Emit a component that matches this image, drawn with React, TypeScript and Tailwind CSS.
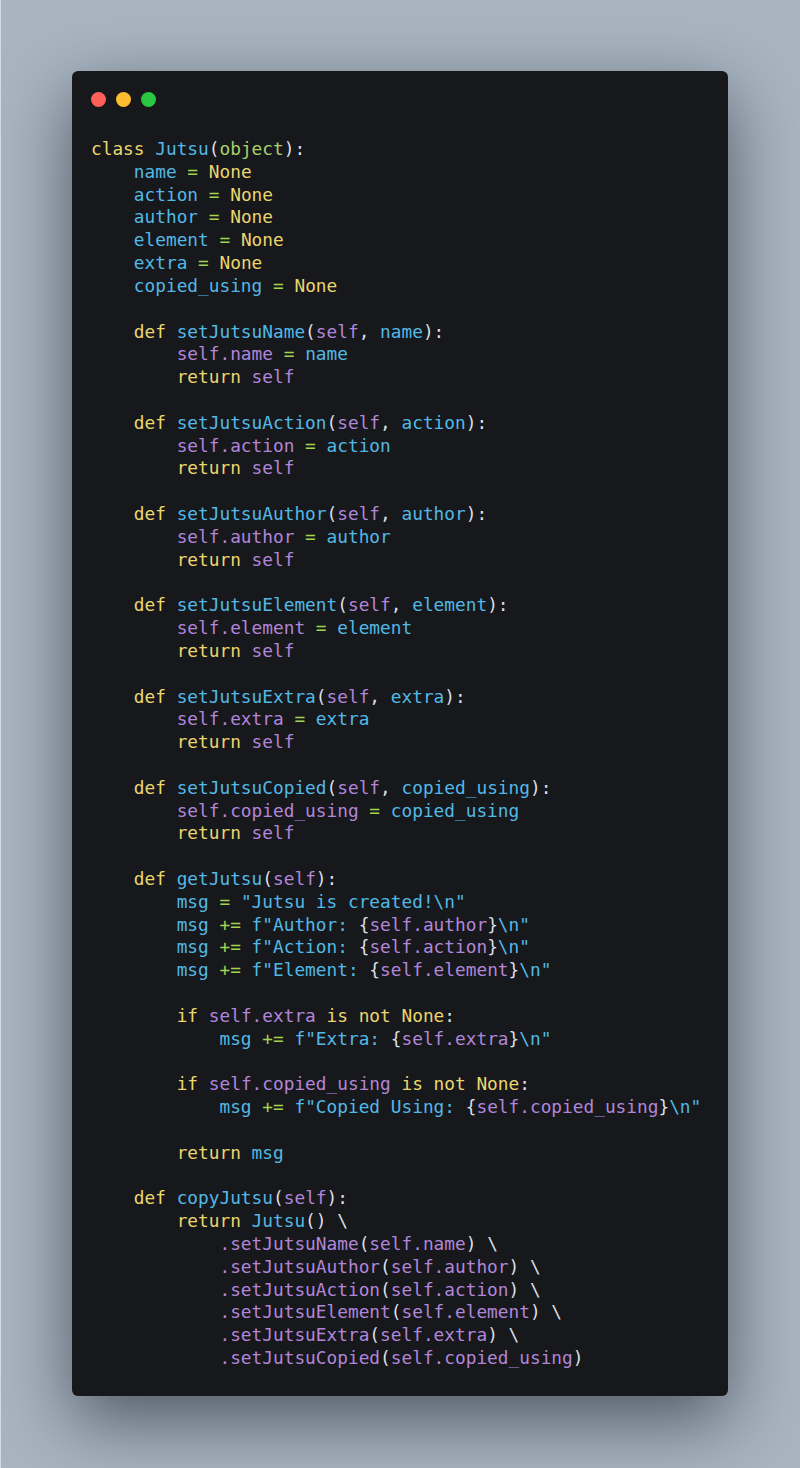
import React from 'react';

type Tok = [string, string];

const K = 'text-[#ead66e]';
const I = 'text-[#52b8e6]';
const P = 'text-[#b186d9]';
const W = 'text-[#dcdfe4]';
const G = 'text-[#a2d452]';
const O = 'text-[#a9d06a]';

const lines: Tok[][] = [
  [['class', K], [' Jutsu', I], ['(', W], ['object', O], ['):', W]],
  [['    name', I], [' = ', G], ['None', K]],
  [['    action', I], [' = ', G], ['None', K]],
  [['    author', I], [' = ', G], ['None', K]],
  [['    element', I], [' = ', G], ['None', K]],
  [['    extra', I], [' = ', G], ['None', K]],
  [['    copied_using', I], [' = ', G], ['None', K]],
  [],
  [['    def', K], [' setJutsuName', I], ['(', W], ['self', P], [', ', W], ['name', I], ['):', W]],
  [['        self.name', P], [' = ', G], ['name', I]],
  [['        return', K], [' self', P]],
  [],
  [['    def', K], [' setJutsuAction', I], ['(', W], ['self', P], [', ', W], ['action', I], ['):', W]],
  [['        self.action', P], [' = ', G], ['action', I]],
  [['        return', K], [' self', P]],
  [],
  [['    def', K], [' setJutsuAuthor', I], ['(', W], ['self', P], [', ', W], ['author', I], ['):', W]],
  [['        self.author', P], [' = ', G], ['author', I]],
  [['        return', K], [' self', P]],
  [],
  [['    def', K], [' setJutsuElement', I], ['(', W], ['self', P], [', ', W], ['element', I], ['):', W]],
  [['        self.element', P], [' = ', G], ['element', I]],
  [['        return', K], [' self', P]],
  [],
  [['    def', K], [' setJutsuExtra', I], ['(', W], ['self', P], [', ', W], ['extra', I], ['):', W]],
  [['        self.extra', P], [' = ', G], ['extra', I]],
  [['        return', K], [' self', P]],
  [],
  [['    def', K], [' setJutsuCopied', I], ['(', W], ['self', P], [', ', W], ['copied_using', I], ['):', W]],
  [['        self.copied_using', P], [' = ', G], ['copied_using', I]],
  [['        return', K], [' self', P]],
  [],
  [['    def', K], [' getJutsu', I], ['(', W], ['self', P], ['):', W]],
  [['        msg', I], [' = ', G], ['"Jutsu is created!\\n"', I]],
  [['        msg', I], [' += ', G], ['f"Author: ', I], ['{', W], ['self.author', P], ['}', W], ['\\n"', I]],
  [['        msg', I], [' += ', G], ['f"Action: ', I], ['{', W], ['self.action', P], ['}', W], ['\\n"', I]],
  [['        msg', I], [' += ', G], ['f"Element: ', I], ['{', W], ['self.element', P], ['}', W], ['\\n"', I]],
  [],
  [['        if', K], [' self.extra', P], [' is not None', K], [':', W]],
  [['            msg', I], [' += ', G], ['f"Extra: ', I], ['{', W], ['self.extra', P], ['}', W], ['\\n"', I]],
  [],
  [['        if', K], [' self.copied_using', P], [' is not None', K], [':', W]],
  [['            msg', I], [' += ', G], ['f"Copied Using: ', I], ['{', W], ['self.copied_using', P], ['}', W], ['\\n"', I]],
  [],
  [['        return', K], [' msg', I]],
  [],
  [['    def', K], [' copyJutsu', I], ['(', W], ['self', P], ['):', W]],
  [['        return', K], [' Jutsu', I], ['() \\', W]],
  [['            .setJutsuName', P], ['(', W], ['self.name', P], [') \\', W]],
  [['            .setJutsuAuthor', P], ['(', W], ['self.author', P], [') \\', W]],
  [['            .setJutsuAction', P], ['(', W], ['self.action', P], [') \\', W]],
  [['            .setJutsuElement', P], ['(', W], ['self.element', P], [') \\', W]],
  [['            .setJutsuExtra', P], ['(', W], ['self.extra', P], [') \\', W]],
  [['            .setJutsuCopied', P], ['(', W], ['self.copied_using', P], [')', W]],
];

export default function App() {
  return (
    <div className="w-[800px] h-[1468px] overflow-hidden bg-[#a8b4c0] border-l border-[#d4dae0] pl-[71px] pt-[71px]">
      {/* editor window */}
      <div className="w-[656px] h-[1325px] rounded-md bg-[#17181b] shadow-[0_24px_70px_rgba(20,28,38,0.6)] pl-[20px] pr-[20px]">
        <div className="flex gap-[10px] pt-[21px] -ml-[1px]">
          <div className="w-[15px] h-[15px] rounded-full bg-[#fe5f57]" />
          <div className="w-[15px] h-[15px] rounded-full bg-[#febc2e]" />
          <div className="w-[15px] h-[15px] rounded-full bg-[#29c840]" />
        </div>

        <div className="mt-[31px] -ml-[1px] font-['DejaVu_Sans_Mono',monospace] text-[17.8px] leading-[22.82px] whitespace-pre">
          {lines.map((line, i) => (
            <div key={i} className="h-[22.82px]">
              {line.map(([text, color], j) => (
                <span key={j} className={color}>
                  {text}
                </span>
              ))}
            </div>
          ))}
        </div>
      </div>
    </div>
  );
}
